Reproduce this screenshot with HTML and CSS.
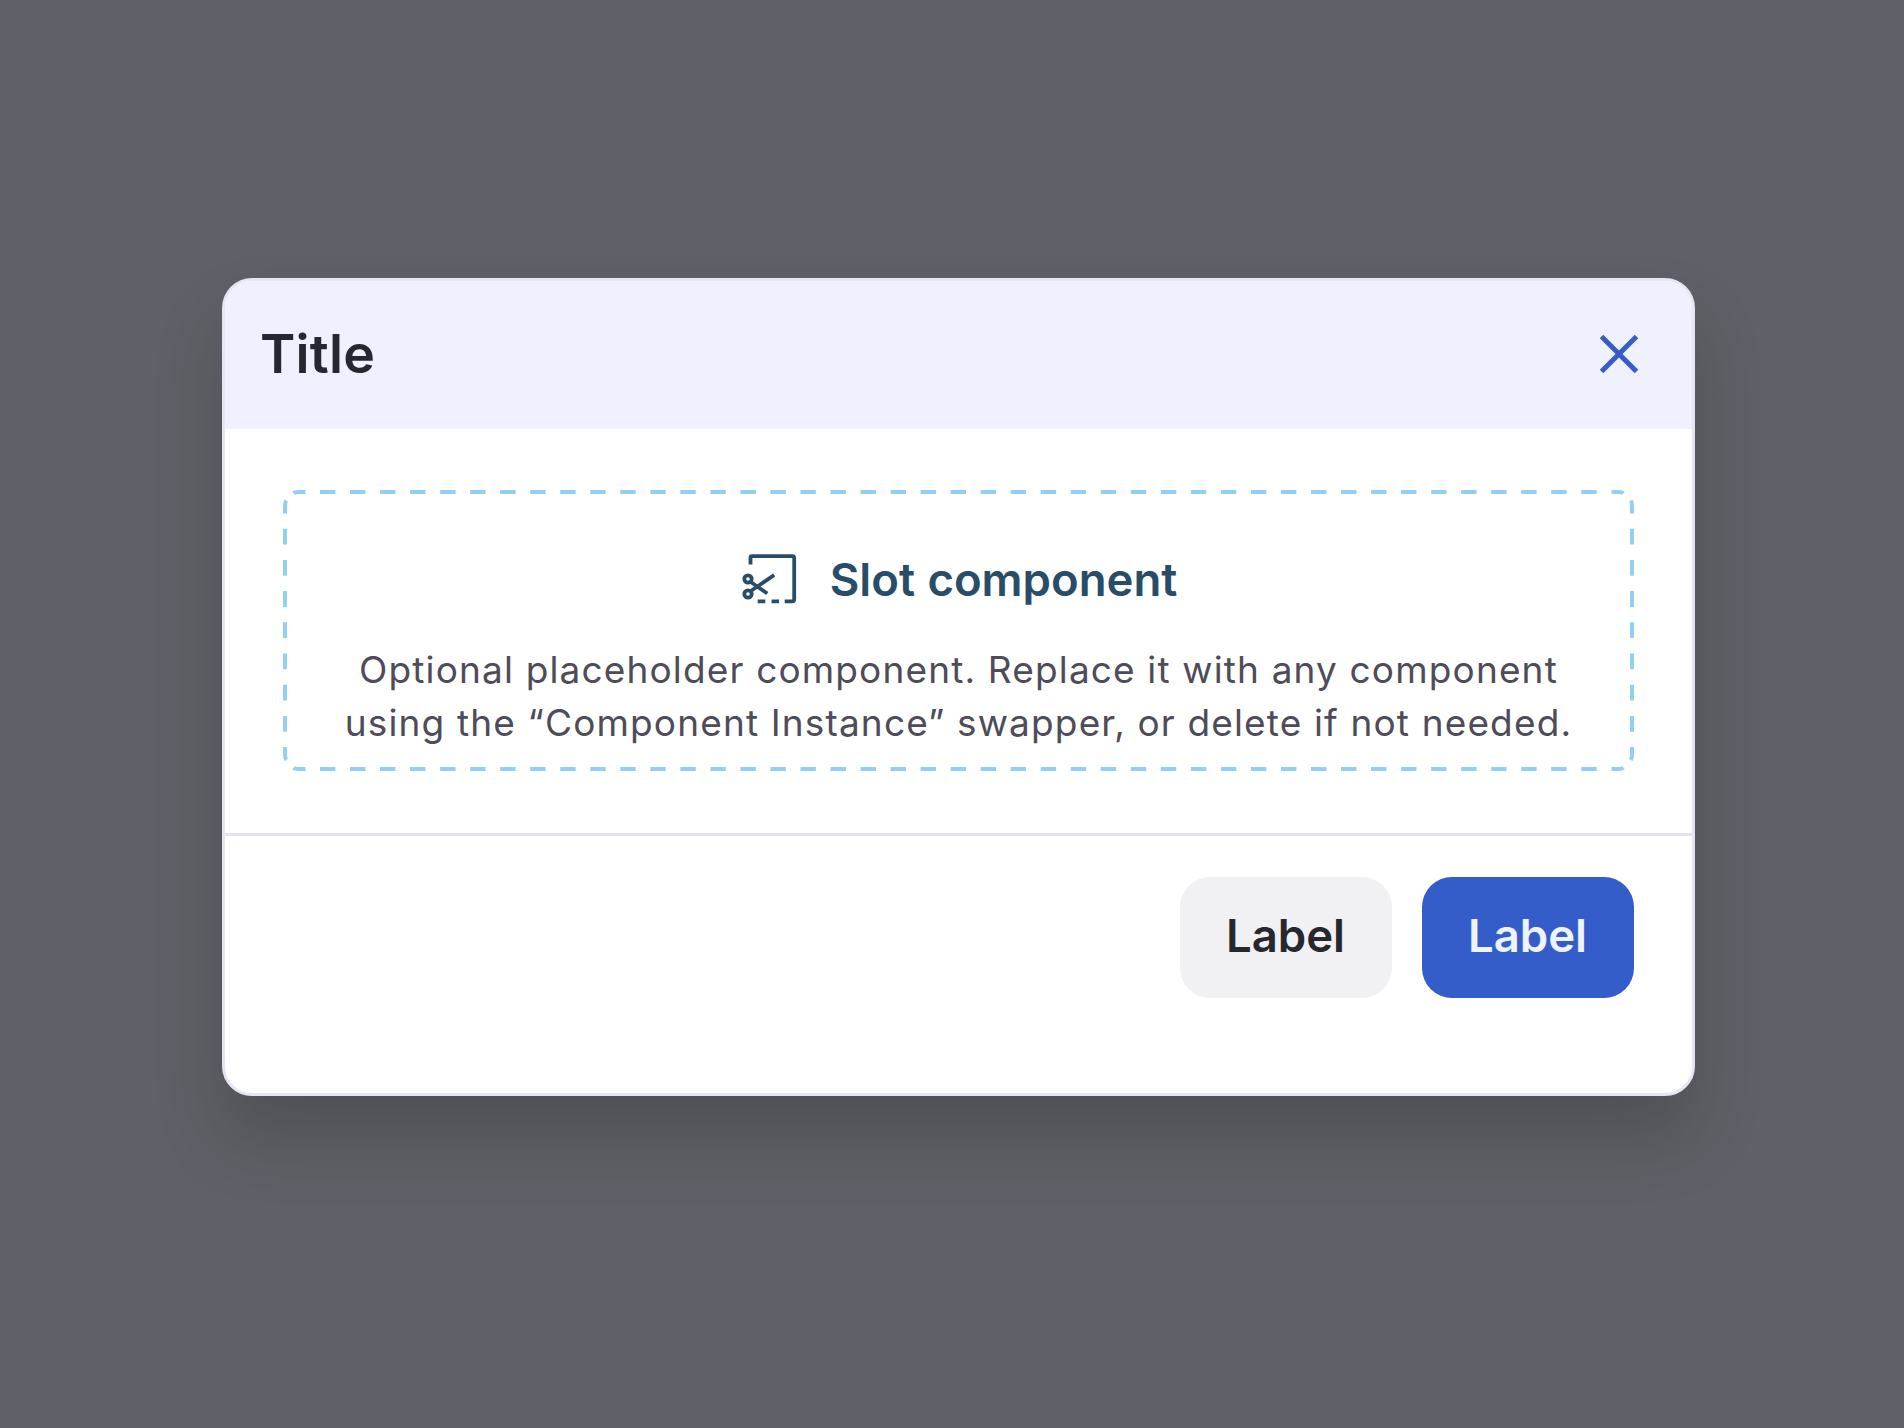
FILE: index.html
```
<!DOCTYPE html>
<html lang="en">
<head>
  <meta charset="UTF-8">
  <title>Modal</title>
  <link rel="stylesheet" href="styles.css">
</head>
<body>

  <div class="modal" role="dialog" aria-labelledby="modal-title">
    <div class="modal-header">
      <h2 id="modal-title">Title</h2>
      <button class="close" aria-label="Close">
        <svg viewBox="0 0 60 60" fill="none" stroke="currentColor" stroke-width="5">
          <path d="M12.5 12.5 47.5 47.5M47.5 12.5 12.5 47.5"/>
        </svg>
      </button>
    </div>

    <div class="modal-body">
      <div class="slot">
        <!-- dashed outline -->
        <svg class="slot-outline" viewBox="0 0 1351 281" fill="none" stroke="currentColor" stroke-width="4">
          <path stroke-dasharray="15.4 14.63" d="M37 2H1328"/>
          <path stroke-dasharray="15.4 14.63" d="M37 279H1328"/>
          <path stroke-dasharray="15.8 15.4" d="M2 38.7V256"/>
          <path stroke-dasharray="15.8 15.4" d="M1349 38.7V256"/>
          <path d="M10.5 3.2Q12 2 15 2H22.5M2 23.5V16Q2 12.5 3.2 10.5"/>
          <path d="M1340.5 3.2Q1339 2 1336 2H1328.5M1349 23.5V16Q1349 12.5 1347.8 10.5"/>
          <path d="M10.5 277.8Q12 279 15 279H22.5M2 257V264.5Q2 268 3.2 270"/>
          <path d="M1340.5 277.8Q1339 279 1336 279H1328.5M1349 257V264.5Q1349 268 1347.8 270"/>
        </svg>
        <div class="slot-title">
          <svg viewBox="0 0 60 60" fill="none" stroke="currentColor" stroke-width="3.8">
            <path d="M10.5 15.6V8.7Q10.5 7.2 12 7.2H52.2Q54.2 7.2 54.2 9.2V50.3Q54.2 52.3 52.2 52.3H44.7"/>
            <path d="M17.7 52.3H25.3M31.6 52.3H39"/>
            <circle cx="8" cy="30" r="3.7"/>
            <circle cx="8" cy="45" r="3.7"/>
            <path d="M10.8 33 27.3 44.5M10.8 42 34.2 26"/>
          </svg>
          <span>Slot component</span>
        </div>
        <p>Optional placeholder component. Replace it with any component<br>using the “Component Instance” swapper, or delete if not needed.</p>
      </div>
    </div>

    <div class="modal-footer">
      <button class="btn">Label</button>
      <button class="btn btn-primary">Label</button>
    </div>
  </div>

</body>
</html>
```
FILE: styles.css
```
* {
  box-sizing: border-box;
}
body {
  margin: 0;
  height: 100vh;
  padding: 278px 0 0 222px;
  background-color: #606068;
  font-family: Inter, sans-serif;
  overflow: hidden;
}
.modal {
  display: flex;
  flex-direction: column;
  width: 1473px;
  height: 818px;
  background-color: #fff;
  border: 3px solid #e6e5f3;
  border-radius: 30px;
  box-shadow: 0 42px 66px rgba(28, 34, 24, 0.24);
}
.modal-header {
  display: flex;
  align-items: center;
  justify-content: space-between;
  height: 148px;
  padding: 0 43px 3px 35px;
  background-color: #eff1ff;
  border-radius: 27px 27px 0 0;
}
.modal-header h2 {
  margin: 0;
  font-size: 53.6px;
  font-weight: 600;
  line-height: 66px;
  letter-spacing: 0.2px;
  color: #252831;
}
.close {
  padding: 0;
  border: none;
  background: none;
  color: #345dca;
  cursor: pointer;
}
.close svg {
  display: block;
  width: 60px;
  height: 60px;
}
.modal-body {
  height: 404px;
  padding: 61px 58px 62px;
}
.slot {
  position: relative;
  height: 281px;
  padding-top: 60px;
  text-align: center;
}
.slot-outline {
  position: absolute;
  top: 0;
  left: 0;
  width: 1351px;
  height: 281px;
  color: #94cff3;
}
.slot-title {
  display: flex;
  align-items: center;
  justify-content: center;
  gap: 30px;
  height: 60px;
  font-size: 45.5px;
  font-weight: 600;
  line-height: 60px;
  word-spacing: 1px;
  color: #294d69;
}
.slot-title svg {
  width: 60px;
  height: 60px;
  margin-bottom: 2px;
}
.slot p {
  margin: 33px 0 0;
  font-size: 37px;
  line-height: 53.4px;
  letter-spacing: 1.15px;
  white-space: nowrap;
  color: #4d4c58;
}
.modal-footer {
  display: flex;
  justify-content: flex-end;
  gap: 30px;
  padding: 41px 58px 0;
  border-top: 3px solid #e4e3f2;
}
.btn {
  width: 212px;
  height: 121px;
  padding: 0 1px 4px 0;
  border: none;
  border-radius: 30px;
  background-color: #f1f1f3;
  color: #27282e;
  font-family: inherit;
  font-size: 45.5px;
  font-weight: 600;
  cursor: pointer;
}
.btn-primary {
  background-color: #345dca;
  color: #eef4ff;
}
```
